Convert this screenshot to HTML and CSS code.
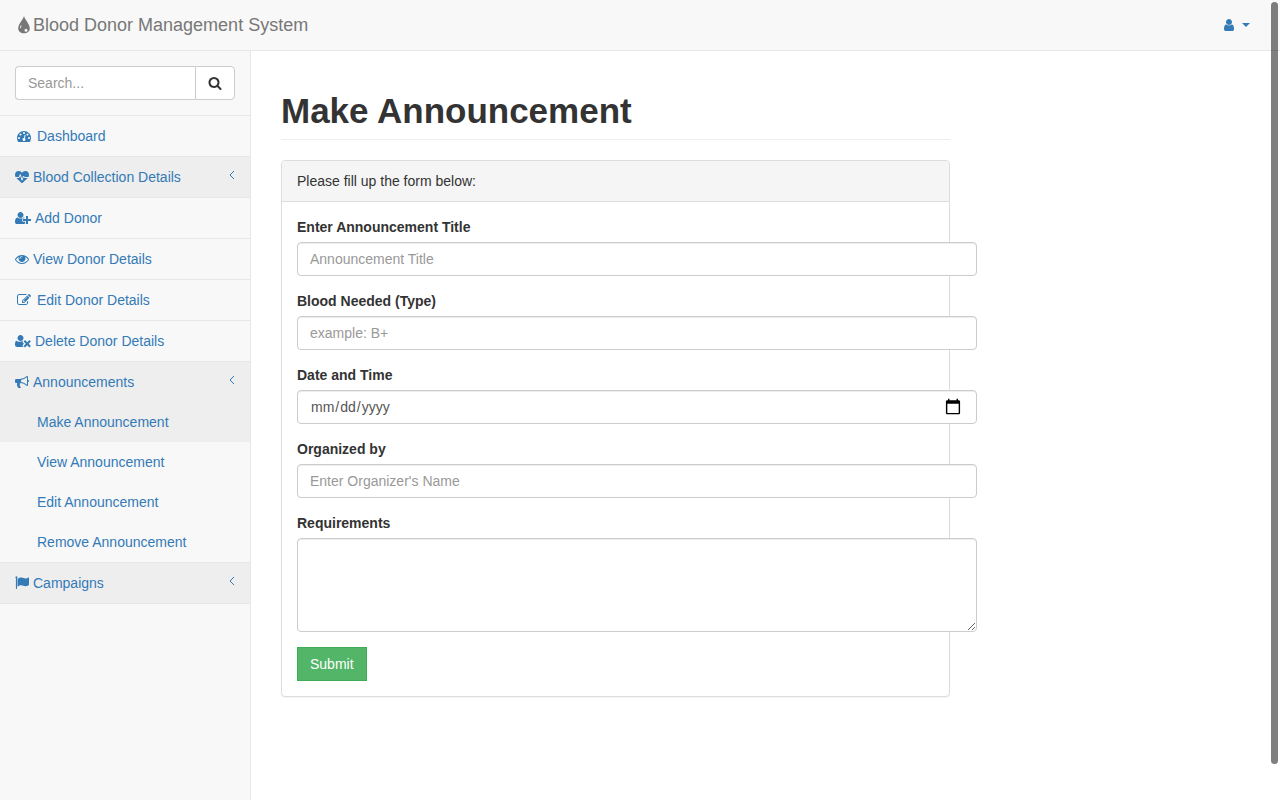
FILE: index.html
```html
<!DOCTYPE html>
<html lang="en">
<head>
<meta charset="utf-8">
<meta name="viewport" content="width=device-width, initial-scale=1">
<title>Blood Donor Management System</title>
<link rel="stylesheet" href="styles.css">
</head>
<body>
<header class="navbar">
  <a class="brand" href="#"><svg class="icon-brand" viewBox="0 0 18 18" aria-hidden="true"><path fill-rule="evenodd" d="M9 0C8.4 3.300 3.200 8.200 3.200 12.200C3.200 15.400 5.700 17.300 9 17.300S14.800 15.400 14.800 12.200C14.800 8.200 9.600 3.300 9 0ZM6 9.300C7 9.200 6.200 11 5.600 12.500C5 12.200 4.700 10.700 6 9.300ZM11 12.700A1.500 1.500 0 1 1 11 15.700A1.500 1.500 0 1 1 11 12.700Z"/></svg>Blood Donor Management System</a>
  <button class="user-menu" type="button" aria-label="User menu"><svg class="icon" viewBox="0 0 1792 1792" aria-hidden="true"><path d="M1536 1399q0 109-62.500 187t-150.500 78h-854q-88 0-150.500-78t-62.500-187q0-85 8.500-160.500t31.500-152 58.500-131 94-89 134.500-34.500q131 128 313 128t313-128q76 0 134.500 34.500t94 89 58.500 131 31.500 152 8.500 160.500zm-256-887q0 159-112.500 271.500t-271.500 112.500-271.500-112.500-112.500-271.500 112.500-271.500 271.500-112.500 271.500 112.500 112.500 271.500z"/></svg><svg class="caret" viewBox="0 0 8 4" aria-hidden="true"><path d="M0 0H8L4 4Z"/></svg></button>
</header>
<div class="layout">
  <nav class="sidebar" aria-label="Main">
    <form class="search" role="search">
      <input class="search-input" type="text" placeholder="Search..." aria-label="Search">
      <button class="search-button" type="button" aria-label="Search"><svg class="icon" viewBox="0 0 1792 1792" aria-hidden="true"><path d="M1216 832q0-185-131.500-316.500t-316.500-131.500-316.500 131.500-131.500 316.500 131.500 316.500 316.500 131.500 316.500-131.500 131.500-316.500zm512 832q0 52-38 90t-90 38q-54 0-90-38l-343-342q-179 124-399 124-143 0-273.500-55.500t-225-150-150-225-55.500-273.500 55.500-273.500 150-225 225-150 273.500-55.500 273.500 55.500 225 150 150 225 55.500 273.500q0 220-124 399l343 343q37 37 37 90z"/></svg></button>
    </form>
    <ul class="menu">
      <li class="menu-item"><a class="menu-link" href="#"><svg class="icon icon-fixed" viewBox="0 0 1792 1792" aria-hidden="true"><path d="M384 1152q0-53-37.500-90.500t-90.500-37.500-90.500 37.500-37.500 90.500 37.500 90.500 90.500 37.500 90.500-37.500 37.500-90.500zm192-448q0-53-37.500-90.500t-90.500-37.500-90.500 37.500-37.500 90.500 37.500 90.500 90.500 37.500 90.500-37.500 37.500-90.500zm428 481l101-382q6-26-7.500-48.500t-38.500-29.500-48 6.500-30 39.500l-101 382q-60 5-107 43.500t-63 98.500q-20 77 20 146t117 89 146-20 89-117q16-60-6-117t-72-91zm660-33q0-53-37.500-90.500t-90.500-37.500-90.500 37.500-37.500 90.500 37.500 90.500 90.500 37.500 90.500-37.500 37.500-90.500zm-640-640q0-53-37.500-90.500t-90.500-37.500-90.500 37.500-37.500 90.500 37.500 90.500 90.500 37.500 90.500-37.500 37.500-90.500zm448 192q0-53-37.500-90.500t-90.500-37.500-90.500 37.500-37.500 90.500 37.500 90.500 90.500 37.500 90.500-37.500 37.500-90.500zm320 448q0 261-141 483-19 29-54 29h-1402q-35 0-54-29-141-221-141-483 0-182 71-348t191-286 286-191 348-71 348 71 286 191 191 286 71 348z"/></svg>Dashboard</a></li>
      <li class="menu-item"><a class="menu-link active" href="#"><svg class="icon" viewBox="0 0 14 14" aria-hidden="true"><path d="M7 13C6.700 13 6.500 12.900 6.300 12.700L1.300 7.900C.4 7 0 6 0 4.900C0 2.500 1.400 1 3.700 1C5.200 1 6.400 2 7 2.700C7.600 2 8.800 1 10.300 1C12.600 1 14 2.500 14 4.900C14 6 13.600 7 12.700 7.900L7.700 12.700C7.500 12.900 7.300 13 7 13Z"/><path class="pulse" d="M.5 7.500H4L5.300 4.500L7 10.200L8.600 6L9.400 7.500H13.500"/></svg>Blood Collection Details<svg class="arrow" viewBox="0 0 6 10" aria-hidden="true"><path d="M5 1L1 5L5 9"/></svg></a></li>
      <li class="menu-item"><a class="menu-link" href="#"><svg class="icon icon-wide" viewBox="0 0 2048 1792" aria-hidden="true"><path d="M704 896q-159 0-271.500-112.500t-112.500-271.500 112.500-271.500 271.500-112.500 271.500 112.500 112.500 271.500-112.500 271.500-271.500 112.500zm960 128h352q13 0 22.500 9.500t9.500 22.500v192q0 13-9.500 22.500t-22.500 9.500h-352v352q0 13-9.500 22.500t-22.500 9.500h-192q-13 0-22.500-9.500t-9.500-22.500v-352h-352q-13 0-22.500-9.500t-9.500-22.500v-192q0-13 9.500-22.500t22.500-9.500h352v-352q0-13 9.500-22.500t22.500-9.500h192q13 0 22.500 9.500t9.500 22.500v352zm-736 224q0 52 38 90t90 38h256v238q-68 50-171 50h-874q-121 0-194-69t-73-190q0-53 3.500-103.500t14-109 26.500-108.500 43-97.500 62-81 85.500-53.500 111.500-20q19 0 39 17 79 61 154.500 91.500t164.500 30.500 164.500-30.500 154.500-91.500q20-17 39-17 132 0 217 96h-223q-52 0-90 38t-38 90v192z"/></svg>Add Donor</a></li>
      <li class="menu-item"><a class="menu-link" href="#"><svg class="icon" viewBox="0 0 1792 1792" aria-hidden="true"><path d="M1664 960q-152-236-381-353 61 104 61 225 0 185-131.500 316.500t-316.500 131.500-316.500-131.500-131.500-316.500q0-121 61-225-229 117-381 353 133 205 333.500 326.500t434.500 121.500 434.500-121.500 333.500-326.500zm-720-384q0-20-14-34t-34-14q-125 0-214.500 89.500t-89.500 214.500q0 20 14 34t34 14 34-14 14-34q0-86 61-147t147-61q20 0 34-14t14-34zm848 384q0 34-20 69-140 230-376.500 368.500t-499.500 138.500-499.500-139-376.500-368q-20-35-20-69t20-69q140-229 376.500-368t499.500-139 499.500 139 376.500 368q20 35 20 69z"/></svg>View Donor Details</a></li>
      <li class="menu-item"><a class="menu-link" href="#"><svg class="icon icon-fixed" viewBox="0 0 1792 1792" aria-hidden="true"><path d="M888 1184l116-116-152-152-116 116v56h96v96h56zm440-720q-16-16-33 1l-350 350q-17 17-1 33t33-1l350-350q17-17 1-33zm80 594v190q0 119-84.500 203.500t-203.500 84.500h-832q-119 0-203.500-84.500t-84.500-203.500v-832q0-119 84.500-203.500t203.500-84.500h832q63 0 117 25 15 7 18 23 3 17-9 29l-49 49q-14 14-32 8-23-6-45-6h-832q-66 0-113 47t-47 113v832q0 66 47 113t113 47h832q66 0 113-47t47-113v-126q0-13 9-22l64-64q15-15 35-7t20 29zm-96-738l288 288-672 672h-288v-288zm444 132l-92 92-288-288 92-92q28-28 68-28t68 28l152 152q28 28 28 68t-28 68z"/></svg>Edit Donor Details</a></li>
      <li class="menu-item"><a class="menu-link" href="#"><svg class="icon icon-wide" viewBox="0 0 2048 1792" aria-hidden="true"><path d="M704 896q-159 0-271.500-112.500t-112.500-271.500 112.500-271.500 271.500-112.500 271.500 112.500 112.500 271.500-112.500 271.500-271.500 112.500zM1130 1216L985 1071Q920 1000 990 935L1045 880Q1000 864 935 864Q916 864 896 881Q817 942 741 972T577 1003T412 972T258 881Q238 864 219 864Q-13 864 0 1405Q0 1664 267 1664H1141Q1100 1664 985 1560Q930 1490 985 1430Z"/><path d="M1280 780L1564 1064L1848 780L2030 962L1746 1246L2030 1530L1848 1712L1564 1428L1280 1712L1098 1530L1382 1246L1098 962Z"/></svg>Delete Donor Details</a></li>
      <li class="menu-item"><a class="menu-link active" href="#"><svg class="icon" viewBox="0 0 1792 1792" aria-hidden="true"><path d="M1664 640q53 0 90.500 37.500t37.500 90.500-37.500 90.500-90.500 37.500v384q0 52-38 90t-90 38q-417-347-812-380-58 19-91 66t-31 100.500 40 92.500q-20 33-23 65.500t6 58 33.500 55 48 50 61.500 50.500q-29 58-111.500 83t-168.500 11.500-132-55.500q-7-23-29.500-87.500t-32-94.500-23-89-15-101 3.500-98.500 22-110.500h-122q-66 0-113-47t-47-113v-192q0-66 47-113t113-47h480q435 0 896-384 52 0 90 38t38 90v384zm-128 604v-954q-394 302-768 343v270q377 42 768 341z"/></svg>Announcements<svg class="arrow" viewBox="0 0 6 10" aria-hidden="true"><path d="M5 1L1 5L5 9"/></svg></a>
        <ul class="submenu">
          <li><a class="submenu-link active" href="#">Make Announcement</a></li>
          <li><a class="submenu-link" href="#">View Announcement</a></li>
          <li><a class="submenu-link" href="#">Edit Announcement</a></li>
          <li><a class="submenu-link" href="#">Remove Announcement</a></li>
        </ul>
      </li>
      <li class="menu-item"><a class="menu-link active" href="#"><svg class="icon" viewBox="0 0 14 14" aria-hidden="true"><path d="M2 2.200V12.600Q2 13 1.600 13H1.200Q.9 13 .9 12.600V2.200A1 1 0 1 1 2 2.200ZM2.500 2.800C4 1.900 5.200 1.500 6.400 1.500C8 1.500 9 2.500 10.400 2.500C11.500 2.500 12.600 1.900 13.300 1.500Q14 1.300 14 2V8.700Q14 9.100 13.600 9.300C12.400 9.900 11.500 10.300 10.300 10.300C8.700 10.300 7.900 9.300 6.200 9.300C5 9.300 3.900 9.900 3 10.400Q2.500 10.600 2.500 10Z"/></svg>Campaigns<svg class="arrow" viewBox="0 0 6 10" aria-hidden="true"><path d="M5 1L1 5L5 9"/></svg></a></li>
    </ul>
  </nav>
  <main class="content">
    <div class="column">
      <h1 class="page-title">Make Announcement</h1>
      <section class="panel">
        <div class="panel-heading">Please fill up the form below:</div>
        <form class="panel-body">
          <div class="field"><label for="title">Enter Announcement Title</label><input class="control" id="title" type="text" placeholder="Announcement Title"></div>
          <div class="field"><label for="blood">Blood Needed (Type)</label><input class="control" id="blood" type="text" placeholder="example: B+"></div>
          <div class="field"><label for="date">Date and Time</label><input class="control" id="date" type="date"></div>
          <div class="field"><label for="organizer">Organized by</label><input class="control" id="organizer" type="text" placeholder="Enter Organizer's Name"></div>
          <div class="field"><label for="requirements">Requirements</label><textarea class="control" id="requirements" rows="4"></textarea></div>
          <button class="submit" type="button">Submit</button>
        </form>
      </section>
    </div>
  </main>
</div>
<div class="scroll-thumb" aria-hidden="true"></div>
</body>
</html>
```
FILE: styles.css
```css
* {
  box-sizing: border-box;
}

body {
  display: flex;
  flex-direction: column;
  min-height: 100vh;
  margin: 0;
  background: #fff;
  color: #333;
  font: 14px/20px "Liberation Sans", Arial, sans-serif;
}

input,
textarea,
button {
  margin: 0;
  font: inherit;
}

ul {
  margin: 0;
  padding: 0;
  list-style: none;
}

a {
  color: #337ab7;
  text-decoration: none;
}

.navbar {
  display: flex;
  align-items: center;
  justify-content: space-between;
  padding: 15px 30px 15px 15px;
  border-bottom: 1px solid #e7e7e7;
  background: #f8f8f8;
}

.brand {
  display: flex;
  align-items: center;
  color: #777;
  font-size: 18px;
}

.icon-brand {
  width: 18px;
  height: 18px;
  fill: currentColor;
}

.user-menu {
  display: flex;
  align-items: center;
  gap: 6px;
  padding: 0;
  border: 0;
  background: none;
  color: #337ab7;
}

.caret {
  width: 8px;
  height: 4px;
  fill: currentColor;
}

.icon {
  flex: none;
  width: 14px;
  height: 14px;
  fill: currentColor;
}

.icon-wide {
  width: 16px;
}

.icon-fixed {
  margin: 0 2px;
}

.pulse {
  fill: none;
  stroke: #eee;
  stroke-width: 1;
}

.layout {
  display: flex;
  flex: 1;
}

.sidebar {
  flex: none;
  width: 251px;
  border-right: 1px solid #e7e7e7;
  background: #f8f8f8;
}

.search {
  display: flex;
  padding: 15px;
  border-bottom: 1px solid #e7e7e7;
}

.search-input {
  flex: 1;
  min-width: 0;
  height: 34px;
  padding: 6px 12px;
  border: 1px solid #ccc;
  border-right: 0;
  border-radius: 4px 0 0 4px;
  background: #fff;
}

.search-button {
  display: flex;
  align-items: center;
  padding: 6px 12px;
  border: 1px solid #ccc;
  border-radius: 0 4px 4px 0;
  background: #fff;
  color: #333;
}

.menu-item {
  border-bottom: 1px solid #e7e7e7;
}

.menu-link {
  display: flex;
  align-items: center;
  gap: 4px;
  padding: 10px 15px;
}

.menu-link.active,
.submenu-link.active {
  background: #eee;
}

.arrow {
  align-self: flex-start;
  width: 6px;
  height: 10px;
  margin: 3px 0 0 auto;
  fill: none;
  stroke: currentColor;
}

.submenu-link {
  display: block;
  padding: 10px 15px 10px 37px;
}

.content {
  flex: 1;
  min-width: 0;
  padding: 0 30px;
}

.column {
  width: 69%;
}

.page-title {
  margin: 40px 0 20px;
  padding-bottom: 9px;
  border-bottom: 1px solid #eee;
  font-size: 35px;
  font-weight: bold;
  line-height: 39px;
}

.panel {
  border: 1px solid #ddd;
  border-radius: 4px;
  background: #fff;
  box-shadow: 0 1px 1px rgba(0, 0, 0, 0.05);
}

.panel-heading {
  padding: 10px 15px;
  border-bottom: 1px solid #ddd;
  border-radius: 3px 3px 0 0;
  background: #f5f5f5;
}

.panel-body {
  padding: 15px;
}

.field {
  margin-bottom: 15px;
}

.field label {
  display: block;
  margin-bottom: 5px;
  font-weight: bold;
}

.control {
  display: block;
  width: calc(100% + 43px);
  height: 34px;
  padding: 6px 12px;
  border: 1px solid #ccc;
  border-radius: 4px;
  background: #fff;
  box-shadow: inset 0 1px 1px rgba(0, 0, 0, 0.075);
  color: #555;
}

.control::-webkit-calendar-picker-indicator {
  width: 18px;
  height: 18px;
}

textarea.control {
  height: auto;
}

::placeholder {
  color: #999;
}

.submit {
  padding: 6px 12px;
  border: 1px solid #3fad56;
  background: #53b567;
  color: #fff;
}

.scroll-thumb {
  position: fixed;
  top: 2px;
  right: 2px;
  bottom: 36px;
  width: 7px;
  border-radius: 4px;
  background: rgba(0, 0, 0, 0.5);
}
```
